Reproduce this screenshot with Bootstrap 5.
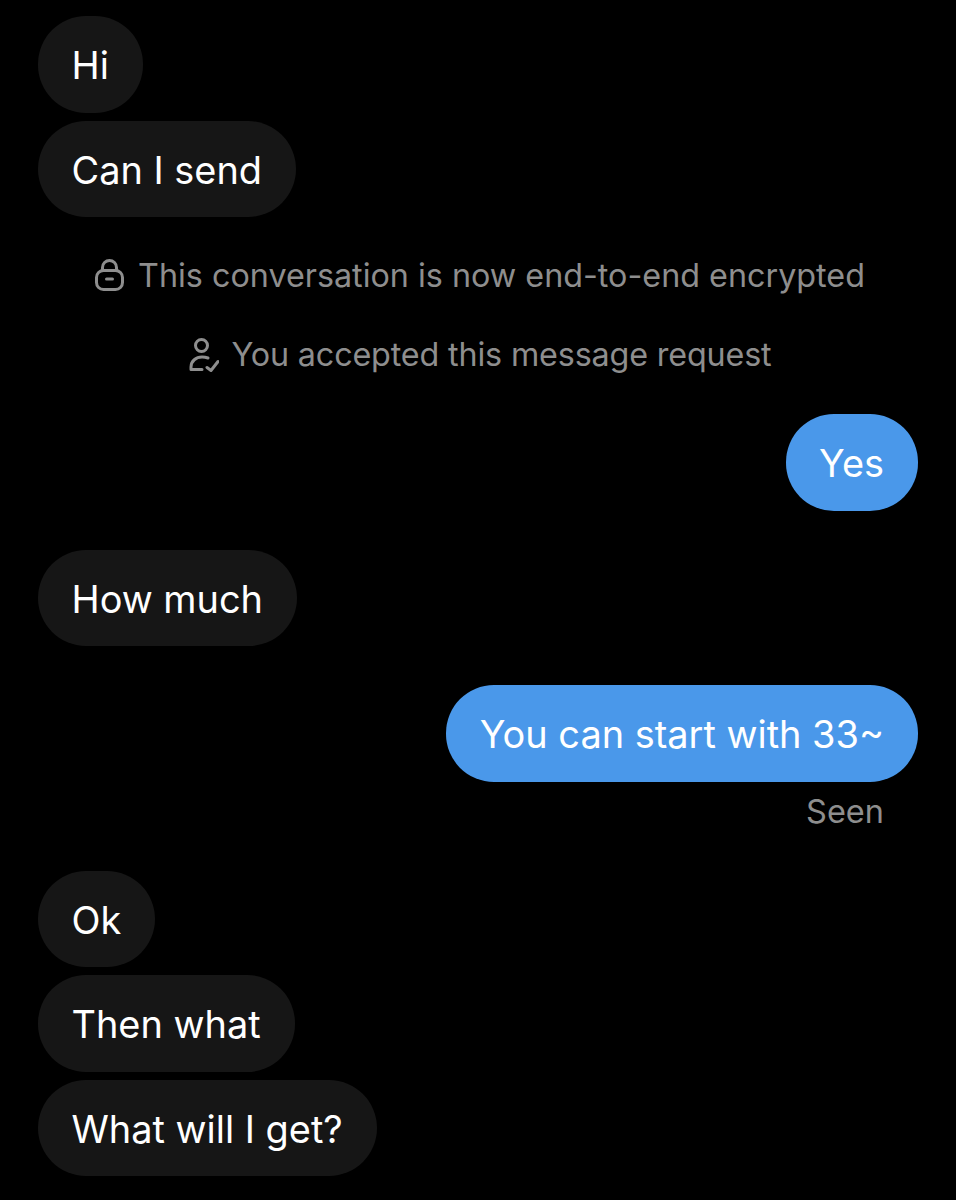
<!DOCTYPE html>
<html lang="en">
<head>
    <meta charset="UTF-8">
    <meta name="viewport" content="width=device-width, initial-scale=1.0">
    <title>Conversation</title>
    <link href="https://cdn.jsdelivr.net/npm/bootstrap@5.3.0/dist/css/bootstrap.min.css" rel="stylesheet">
    <style>
        body {
            background-color: #000;
            font-family: "Inter", "Liberation Sans", sans-serif;
            height: 1200px;
            overflow: hidden;
        }
        .chat-wrap {
            padding: 16px 38px 0;
        }
        .bubble {
            height: 96.5px;
            padding: 0 34px 0 33.5px;
            border-radius: 48px;
            font-size: 37.9px;
            line-height: 98px;
            color: #fff;
            white-space: nowrap;
        }
        .bubble-in { background-color: #161616; }
        .bubble-out { background-color: #4a98ea; }
        .notice {
            color: #8e8e8e;
            font-size: 32.3px;
            line-height: 40px;
            padding-left: 3px;
            gap: 12px;
        }
        .notice svg { flex: none; }
        .notice-tight { letter-spacing: -0.15px; }
        .seen-text {
            color: #8e8e8e;
            font-size: 32.5px;
            line-height: 40px;
            padding-right: 34px;
            margin-top: 10px;
        }
        .mt-turn { margin-top: 39px; }
    </style>
</head>
<body>
    <div class="chat-wrap d-flex flex-column">
        <div class="d-flex flex-column align-items-start gap-2">
            <div class="bubble bubble-in">Hi</div>
            <div class="bubble bubble-in">Can I send</div>
        </div>

        <div class="notice d-flex justify-content-center align-items-center mt-turn">
            <svg width="32" height="34" viewBox="0 0 32 34" fill="none" stroke="#8e8e8e" stroke-width="3" stroke-linecap="round">
                <rect x="2.500" y="11.500" width="26" height="19" rx="7"/>
                <path d="M8.500 11.500V8.500a7 7 0 0 1 14 0v3"/>
                <path d="M12.500 20h6"/>
            </svg>
            <span>This conversation is now end-to-end encrypted</span>
        </div>

        <div class="notice notice-tight d-flex justify-content-center align-items-center mt-turn">
            <svg width="32" height="36" viewBox="0 0 32 36" fill="none" stroke="#8e8e8e" stroke-width="3" stroke-linecap="round" stroke-linejoin="round">
                <circle cx="14.500" cy="8.500" r="6"/>
                <path d="M15 32.500H4v-2.500c0-6 5-10 11-10 2 0 4 .3 6 1"/>
                <path d="M20 30.500l4 3 7-9"/>
            </svg>
            <span>You accepted this message request</span>
        </div>

        <div class="d-flex justify-content-end mt-turn">
            <div class="bubble bubble-out">Yes</div>
        </div>

        <div class="d-flex justify-content-start mt-turn">
            <div class="bubble bubble-in">How much</div>
        </div>

        <div class="d-flex justify-content-end mt-turn">
            <div class="bubble bubble-out">You can start with 33~</div>
        </div>
        <div class="seen-text text-end">Seen</div>

        <div class="d-flex flex-column align-items-start gap-2 mt-turn">
            <div class="bubble bubble-in">Ok</div>
            <div class="bubble bubble-in">Then what</div>
            <div class="bubble bubble-in">What will I get?</div>
        </div>
    </div>
    <script src="https://cdn.jsdelivr.net/npm/bootstrap@5.3.0/dist/js/bootstrap.bundle.min.js"></script>
</body>
</html>
